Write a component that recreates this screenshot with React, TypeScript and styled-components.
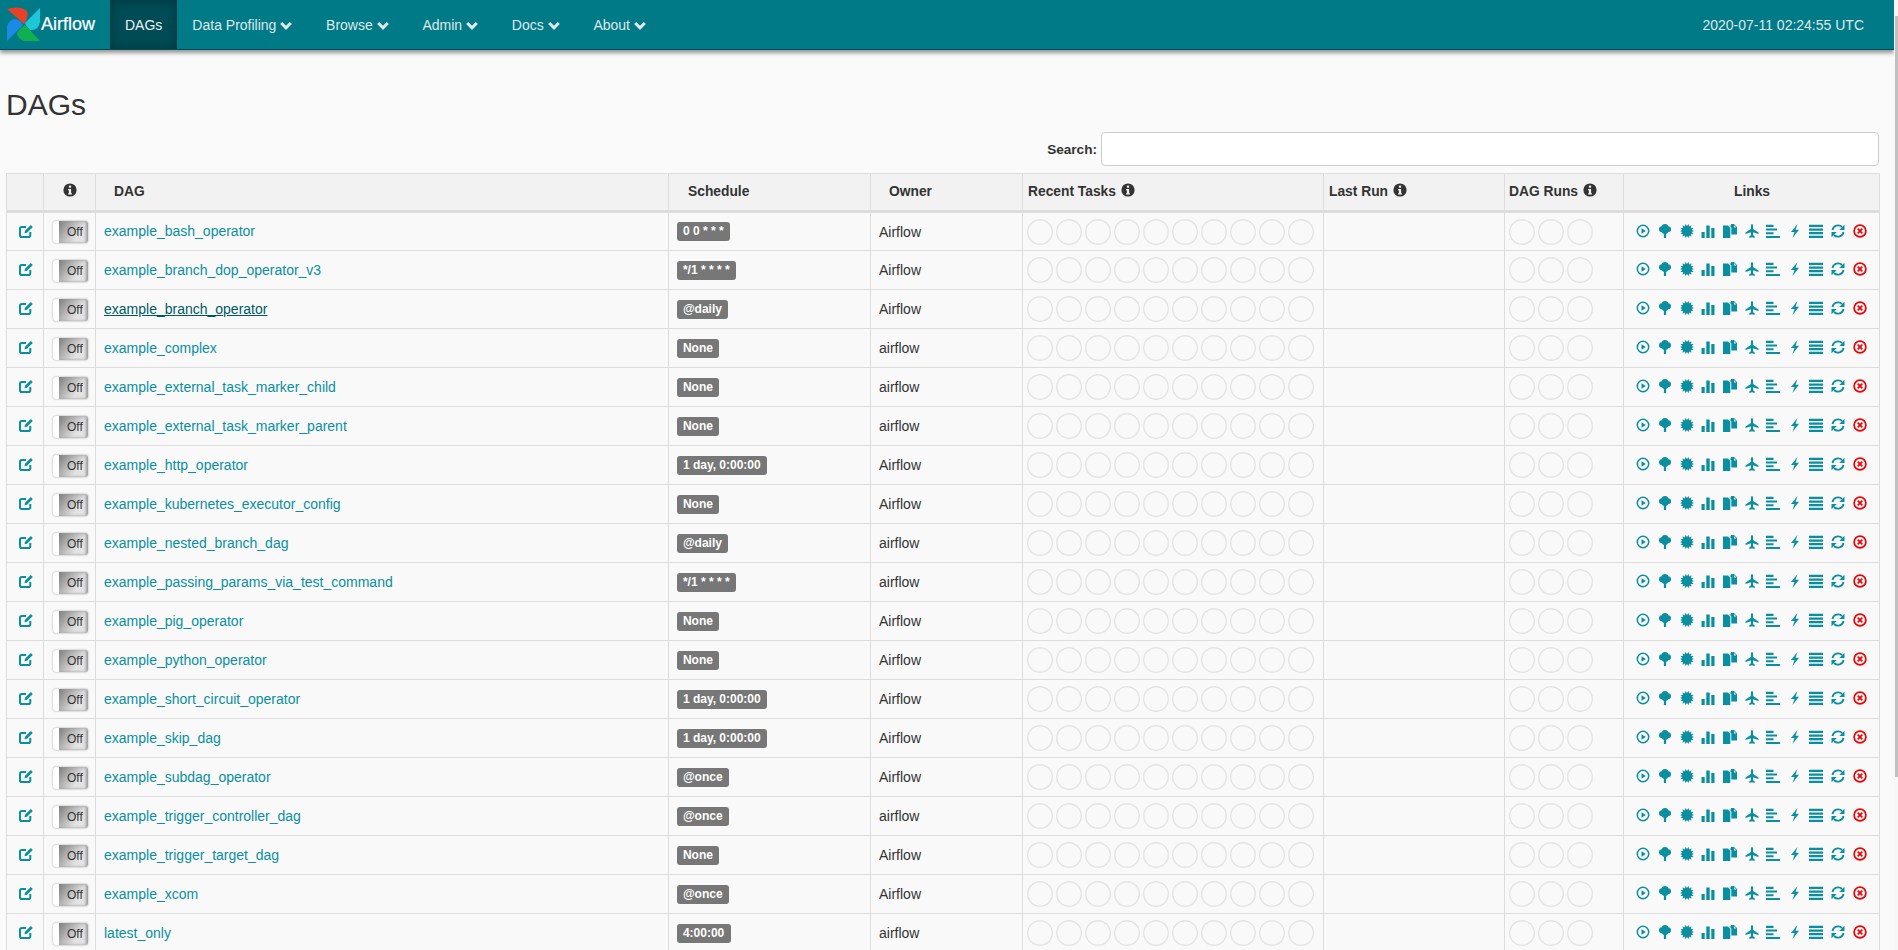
import React from "react";
import styled, { createGlobalStyle } from "styled-components";

const Global = createGlobalStyle`
  html, body { margin: 0; padding: 0; height: 950px; overflow: hidden; background: #fafafa; }
  body { font-family: "Liberation Sans", Arial, sans-serif; font-size: 14px; color: #333; }
  * { box-sizing: border-box; }
`;

const Shell = styled.div`
  display: flex;
  height: 950px;
  overflow: hidden;
`;
const Page = styled.div`
  flex: 1;
  min-width: 0;
  height: 950px;
  overflow: hidden;
`;
const ScrollTrack = styled.div`
  width: 4px;
  height: 950px;
  padding: 16px 0 0 1px;
  background: #f7f7f7;
`;
const ScrollThumb = styled.div`
  width: 3px;
  height: 761px;
  background: #c1c1c1;
`;
const Navbar = styled.nav`
  display: flex;
  align-items: stretch;
  height: 50px;
  background: #007a87;
  border-bottom: 1px solid #00505a;
  box-shadow: 0 3px 4px rgba(0, 0, 0, 0.4);
  position: relative;
`;
const Brand = styled.a`
  display: flex;
  align-items: center;
  width: 110px;
  color: #fff;
  font-size: 18px;
  -webkit-text-stroke: 0.2px #fff;
`;
const BrandMark = styled.svg`
  width: 41px;
  height: 49px;
  flex: none;
`;
const NavItem = styled.a<{ $active?: boolean }>`
  display: flex;
  align-items: center;
  gap: 4px;
  padding: 0 ${(p) => (p.$active ? "15px" : "18.7px")} 0 15px;
  color: ${(p) => (p.$active ? "#eef4f4" : "#dfe9ea")};
  background: ${(p) => (p.$active ? "#004c56" : "transparent")};
  box-shadow: ${(p) => (p.$active ? "inset 0 0 12px rgba(0,0,0,.3)" : "none")};
`;
const Chevron = styled.svg`
  width: 12px;
  height: 11px;
  margin-top: 1px;
`;
const Clock = styled.div`
  margin-left: auto;
  align-self: center;
  padding-right: 30px;
  color: #dfe9ea;
`;
const Content = styled.main`
  padding: 38px 15px 0 6px;
`;
const Title = styled.h1`
  margin: 0 0 11px;
  font-size: 30px;
  line-height: 33px;
  font-weight: 400;
`;
const SearchRow = styled.label`
  display: flex;
  justify-content: flex-end;
  align-items: center;
  gap: 4px;
  height: 34px;
  margin-bottom: 7px;
  font-size: 13.6px;
  font-weight: 700;
`;
const SearchInput = styled.input`
  width: 778px;
  height: 34px;
  border: 1px solid #ccc;
  border-radius: 4px;
  background: #fff;
`;
const Table = styled.table`
  width: 1873px;
  table-layout: fixed;
  border-collapse: collapse;
`;
const Col = styled.col<{ $w: number }>`
  width: ${(p) => p.$w}px;
`;
const Th = styled.th<{ $pad?: number; $center?: boolean }>`
  height: 38px;
  padding: 0 4px 2px ${(p) => p.$pad ?? 5}px;
  background: #f2f2f2;
  border: 1px solid #ddd;
  border-bottom: 3px solid #ddd;
  font-size: 13.8px;
  font-weight: 700;
  text-align: ${(p) => (p.$center ? "center" : "left")};
  white-space: nowrap;
`;
const Td = styled.td<{ $center?: boolean }>`
  height: 39px;
  padding: 0 8px;
  background: #f9f9f9;
  border: 1px solid #ddd;
  vertical-align: middle;
  text-align: ${(p) => (p.$center ? "center" : "left")};
  white-space: nowrap;
`;
const DagName = styled.a<{ $hover?: boolean }>`
  position: relative;
  top: -0.5px;
  color: ${(p) => (p.$hover ? "#005a66" : "#0a8fa0")};
  text-decoration: ${(p) => (p.$hover ? "underline" : "none")};
`;
const Label = styled.span`
  display: inline-block;
  height: 19px;
  margin-left: -0.5px;
  padding: 0 6.4px;
  border-radius: 3px;
  background: #777;
  color: #fff;
  font-size: 12px;
  font-weight: 700;
  line-height: 19px;
`;
const Toggle = styled.div`
  display: flex;
  width: 35px;
  height: 22px;
  margin: 1px 0 0 1px;
  border-radius: 3px;
  background: #fff;
  box-shadow: 0 0 2px rgba(0, 0, 0, 0.4);
  overflow: hidden;
`;
const ToggleFace = styled.div`
  flex: 1;
  margin-left: 6px;
  padding: 4px 0 0 8px;
  background: linear-gradient(125deg, #7c7c7c 0%, #b5b5b5 35%, #e2e2e2 65%, #e6e6e6 100%);
  box-shadow: inset -2px 0 3px #9a9a9a;
  color: #333;
  font-size: 12px;
  line-height: 15px;
`;
const InfoBadge = styled.svg`
  width: 14px;
  height: 14px;
  margin-left: 5px;
  vertical-align: -1px;
`;
const EditGlyph = styled.svg`
  display: block;
  width: 14px;
  height: 14px;
  margin: -2px 0 0 4px;
  color: #0a8fa0;
`;
const LinkRow = styled.div`
  display: flex;
  justify-content: center;
  gap: 7.65px;
`;
const LinkGlyph = styled.svg<{ $danger?: boolean }>`
  width: 14px;
  height: 14px;
  margin-top: -2px;
  color: ${(p) => (p.$danger ? "#f00000" : "#0a8fa0")};
`;
const Circles = styled.svg<{ $shift: number }>`
  display: block;
  height: 26px;
  margin-left: ${(p) => p.$shift}px;
`;

const starPoints = (() => {
  const out: string[] = [];
  for (let i = 0; i < 28; i++) {
    const r = i % 2 ? 4.9 : 7.2;
    const a = (i / 28) * Math.PI * 2;
    out.push(`${(7 + r * Math.cos(a)).toFixed(2)},${(7 + r * Math.sin(a)).toFixed(2)}`);
  }
  return out.join(" ");
})();

const linkIcons: React.ReactNode[] = [
  <>
    <circle cx="7" cy="7" r="5.7" fill="none" stroke="currentColor" strokeWidth="1.5" />
    <path d="M5.5 4.3 9.8 7l-4.3 2.7z" fill="currentColor" />
  </>,
  <>
    <circle cx="7" cy="3.4" r="3.3" fill="currentColor" />
    <circle cx="4" cy="5.200" r="3" fill="currentColor" />
    <circle cx="10" cy="5.200" r="3" fill="currentColor" />
    <circle cx="7" cy="6.800" r="3.300" fill="currentColor" />
    <rect x="5.900" y="8" width="2.200" height="6" fill="currentColor" />
  </>,
  <polygon points={starPoints} fill="currentColor" />,
  <path d="M0.500 8h3.200v6H.5zM5.300 1.500h3.400V14H5.300zM10.300 4h3.200v10h-3.200z" fill="currentColor" />,
  <path d="M0 1.500h5l2.300 2.300V14H0zM8 0h3l3 3v7.500H8.300V3.300L6.300 1.500H8zM11 1v2.500h2.300z" fill="currentColor" fillRule="evenodd" />,
  <path d="M7 0c.7 0 1.100 1.300 1.100 2.500V5l5.400 3.400V10L8.100 8.200v3l1.600 1.300V14L7 13.200 4.300 14v-1.500l1.600-1.300v-3L.5 10V8.400L5.900 5V2.500C5.900 1.300 6.300 0 7 0z" fill="currentColor" />,
  <path d="M0 .8h7.500v2.100H0zM0 4.500h11v2.100H0zM0 8.200h7.500v2.100H0zM0 11.900h14V14H0z" fill="currentColor" />,
  <path d="M9.500 0 3 8h3.500L4.500 14 11 5.800H7.500z" fill="currentColor" />,
  <path d="M0 .8h14v2.300H0zM0 4.400h14v2.300H0zM0 8h14v2.300H0zM0 11.700h14V14H0z" fill="currentColor" />,
  <>
    <path d="M1.500 6A5.600 5.600 0 0 1 11 3" fill="none" stroke="currentColor" strokeWidth="1.800" />
    <path d="M13.500 .8V6H8.300z" fill="currentColor" />
    <path d="M12.500 8A5.600 5.600 0 0 1 3 11" fill="none" stroke="currentColor" strokeWidth="1.800" />
    <path d="M.5 13.200V8h5.200z" fill="currentColor" />
  </>,
  <>
    <circle cx="7" cy="7" r="5.900" fill="none" stroke="currentColor" strokeWidth="1.700" />
    <path d="M4.700 4.700l4.600 4.600M9.300 4.700 4.700 9.300" fill="none" stroke="currentColor" strokeWidth="1.700" />
  </>,
];

const Info = () => (
  <InfoBadge viewBox="0 0 14 14">
    <circle cx="7" cy="7" r="6.600" fill="#333" />
    <rect x="5.900" y="2.600" width="2.200" height="2.100" fill="#f2f2f2" />
    <path d="M5 6h3.100v4.200H9v1.300H5v-1.300h.9V7.300H5z" fill="#f2f2f2" />
  </InfoBadge>
);

const Edit = () => (
  <EditGlyph viewBox="0 0 14 14">
    <path
      d="M11.300 8v3.200a1.800 1.800 0 0 1-1.800 1.800H2.800A1.800 1.800 0 0 1 1 11.200V4.800A1.800 1.800 0 0 1 2.800 3H7"
      fill="none"
      stroke="currentColor"
      strokeWidth="2"
    />
    <path d="M5.500 9.300 6 6.800 11.800 1l2 2L8 8.800z" fill="currentColor" />
  </EditGlyph>
);

const Down = () => (
  <Chevron viewBox="0 0 12 11">
    <path d="M1.200 3 6 7.800 10.800 3" fill="none" stroke="currentColor" strokeWidth="3" />
  </Chevron>
);

const Ring = ({ count, width, shift }: { count: number; width: number; shift: number }) => (
  <Circles width={width} viewBox={`0 0 ${width} 26`} $shift={shift}>
    {Array.from({ length: count }, (_, i) => (
      <circle key={i} cx={13 + i * 29} cy="13" r="12.300" fill="none" stroke="#e4e4e4" strokeWidth="1.400" />
    ))}
  </Circles>
);

const rows: [string, string, string][] = [
  ["example_bash_operator", "0 0 * * *", "Airflow"],
  ["example_branch_dop_operator_v3", "*/1 * * * *", "Airflow"],
  ["example_branch_operator", "@daily", "Airflow"],
  ["example_complex", "None", "airflow"],
  ["example_external_task_marker_child", "None", "airflow"],
  ["example_external_task_marker_parent", "None", "airflow"],
  ["example_http_operator", "1 day, 0:00:00", "Airflow"],
  ["example_kubernetes_executor_config", "None", "Airflow"],
  ["example_nested_branch_dag", "@daily", "airflow"],
  ["example_passing_params_via_test_command", "*/1 * * * *", "airflow"],
  ["example_pig_operator", "None", "Airflow"],
  ["example_python_operator", "None", "Airflow"],
  ["example_short_circuit_operator", "1 day, 0:00:00", "Airflow"],
  ["example_skip_dag", "1 day, 0:00:00", "Airflow"],
  ["example_subdag_operator", "@once", "Airflow"],
  ["example_trigger_controller_dag", "@once", "airflow"],
  ["example_trigger_target_dag", "None", "Airflow"],
  ["example_xcom", "@once", "Airflow"],
  ["latest_only", "4:00:00", "airflow"],
];

const menus = ["Data Profiling", "Browse", "Admin", "Docs", "About"];
const widths = [37, 52, 573, 202, 152, 301, 181, 119, 256];

export default function App() {
  return (
    <Shell>
      <Global />
      <Page>
        <Navbar>
          <Brand>
            <BrandMark viewBox="0 0 41 49">
              <path d="M24 24 7 9Q20 5 27 11 29 17 24 24z" fill="#e8402a" />
              <path d="M25 23 40 8V22Q38 31 30 30 26 27 25 23z" fill="#1cc8d8" />
              <path d="M25 25 40 41H24Q17 38 17 33 20 28 25 25z" fill="#0fb050" />
              <path d="M23 25 7 41V27Q9 19 16 19 21 21 23 25z" fill="#1a8ae6" />
            </BrandMark>
            Airflow
          </Brand>
          <NavItem $active>DAGs</NavItem>
          {menus.map((m) => (
            <NavItem key={m}>
              {m}
              <Down />
            </NavItem>
          ))}
          <Clock>2020-07-11 02:24:55 UTC</Clock>
        </Navbar>
        <Content>
          <Title>DAGs</Title>
          <SearchRow>
            Search:
            <SearchInput />
          </SearchRow>
          <Table>
            <colgroup>
              {widths.map((w, i) => (
                <Col key={i} $w={w} />
              ))}
            </colgroup>
            <thead>
              <tr>
                <Th />
                <Th $center $pad={0}>
                  <Info />
                </Th>
                <Th $pad={18}>DAG</Th>
                <Th $pad={19}>Schedule</Th>
                <Th $pad={18}>Owner</Th>
                <Th>
                  Recent Tasks
                  <Info />
                </Th>
                <Th>
                  Last Run
                  <Info />
                </Th>
                <Th $pad={4}>
                  DAG Runs
                  <Info />
                </Th>
                <Th $center>Links</Th>
              </tr>
            </thead>
            <tbody>
              {rows.map(([name, schedule, owner]) => (
                <tr key={name}>
                  <Td>
                    <Edit />
                  </Td>
                  <Td>
                    <Toggle>
                      <ToggleFace>Off</ToggleFace>
                    </Toggle>
                  </Td>
                  <Td>
                    <DagName $hover={name === "example_branch_operator"}>{name}</DagName>
                  </Td>
                  <Td>
                    <Label>{schedule}</Label>
                  </Td>
                  <Td>{owner}</Td>
                  <Td>
                    <Ring count={10} width={291} shift={-4} />
                  </Td>
                  <Td />
                  <Td>
                    <Ring count={3} width={88} shift={-4} />
                  </Td>
                  <Td>
                    <LinkRow>
                      {linkIcons.map((icon, i) => (
                        <LinkGlyph key={i} viewBox="0 0 14 14" $danger={i === 10}>
                          {icon}
                        </LinkGlyph>
                      ))}
                    </LinkRow>
                  </Td>
                </tr>
              ))}
            </tbody>
          </Table>
        </Content>
      </Page>
      <ScrollTrack>
        <ScrollThumb />
      </ScrollTrack>
    </Shell>
  );
}
